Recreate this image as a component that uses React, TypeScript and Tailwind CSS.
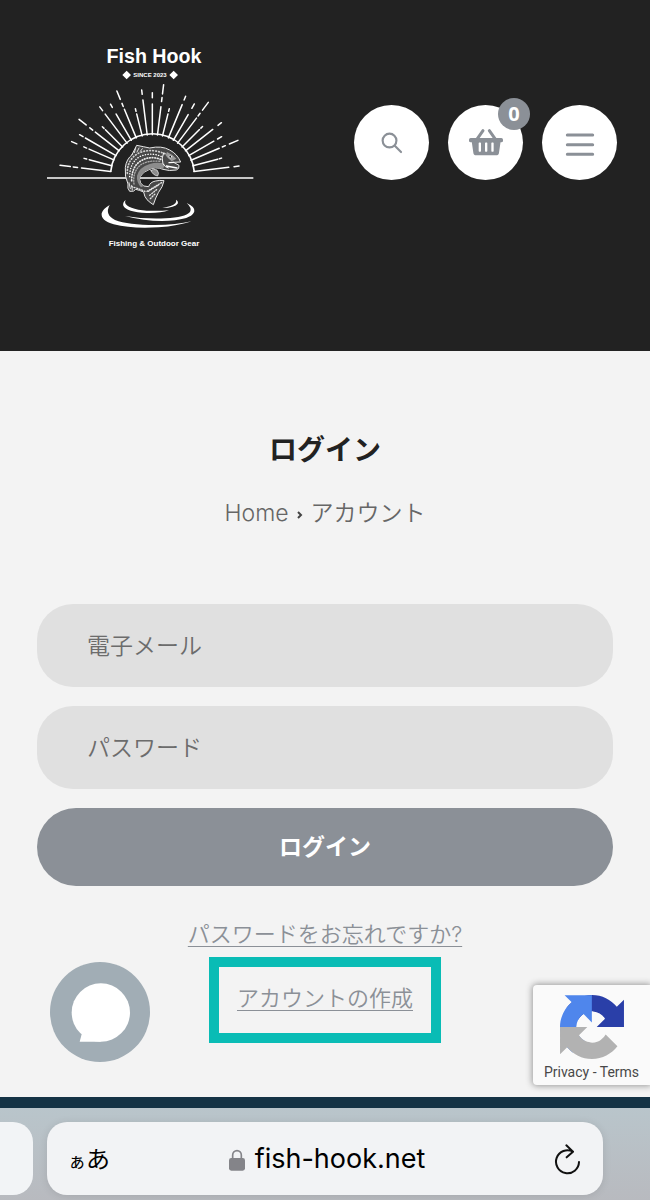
import React from "react";

const JP = "font-['Inter','Noto_Sans_CJK_JP',sans-serif]";

type Ray = [angle: number, ...segments: [number, number][]];

const rays: Ray[] = [
  [0, [126, 218], [237, 252]],
  [-7, [126, 232], [249, 262]],
  [-14, [126, 194], [202, 210]],
  [-22.5, [126, 219], [228, 238], [251, 278]],
  [-30, [126, 217], [240, 251]],
  [-37, [126, 235], [248, 262]],
  [-45, [126, 199], [205, 212]],
  [-52, [126, 217], [227, 238], [252, 279]],
  [-60, [126, 232], [240, 252]],
  [-66.5, [126, 207], [215, 224], [247, 264]],
  [-75, [126, 196], [204, 212]],
  [-83, [126, 214], [226, 239], [248, 279]],
  [7, [126, 211], [227, 239], [250, 278]],
  [14, [126, 194], [202, 210]],
  [22.5, [126, 234], [249, 261]],
  [30, [126, 215], [237, 252]],
  [37, [126, 220], [228, 238], [250, 279]],
  [45, [126, 200], [206, 213]],
  [52, [126, 230], [250, 263]],
  [60, [126, 213], [226, 240]],
  [67, [126, 218], [228, 238], [251, 279]],
  [75, [126, 203], [208, 215]],
  [83, [126, 231], [247, 262]],
];

function Sunburst() {
  return (
    <g stroke="#fff" strokeWidth="4.5" strokeLinecap="round">
      {rays.flatMap(([angle, ...segments]) =>
        segments.map(([from, to]) => {
          const s = Math.sin((angle * Math.PI) / 180);
          const c = Math.cos((angle * Math.PI) / 180);
          return (
            <line
              key={`${angle}:${from}`}
              x1={352 + s * from}
              y1={440 - c * from}
              x2={352 + s * to}
              y2={440 - c * to}
            />
          );
        }),
      )}
    </g>
  );
}

function Trout() {
  return (
    <g strokeLinecap="round" strokeLinejoin="round">
      <path
        d="M291 374L305 346Q325 350 344 354Q380 346 404 360Q427 372 437 396L416 397L432 406Q434 417 424 420Q402 424 384 418Q362 408 340 420Q316 430 314 448Q314 460 326 468L341 470Q345 456 362 453Q374 450 387 452Q384 470 370 488Q362 502 355 524Q345 518 336 509Q328 500 326 486Q312 480 302 478Q298 486 284 484Q276 476 279 462Q268 440 271 412Q274 388 291 374Z"
        fill="#484848"
        stroke="#e8e8e8"
        strokeWidth="3"
      />
      <path
        d="M384 418Q362 408 340 420Q316 430 314 448Q314 460 326 468L318 472Q304 456 306 438Q312 412 344 402Q368 394 390 402Z"
        fill="#8c8c8c"
      />
      <path d="M277 430Q276 390 308 371Q344 352 392 372" fill="none" stroke="#d0d0d0" strokeWidth="5" strokeDasharray="2 7" />
      <path d="M284 440Q284 398 314 380Q350 364 384 382" fill="none" stroke="#fff" strokeWidth="4" strokeDasharray="1 7" />
      <path d="M290 452Q290 412 314 395Q344 374 382 390" fill="none" stroke="#ececec" strokeWidth="5" strokeDasharray="2 6" />
      <path d="M297 462Q292 424 318 404Q340 390 376 394" fill="none" stroke="#aaa" strokeWidth="4" strokeDasharray="3 5" />
      <path d="M290 470Q305 474 330 484M340 484L372 464M344 496L366 478M346 506L360 492M336 484L380 458" fill="none" stroke="#e4e4e4" strokeWidth="4" strokeDasharray="3 5" />
      <path d="M302 354L298 368M312 354L306 366M322 356L316 364M282 458L286 476M290 466L292 480" fill="none" stroke="#ddd" strokeWidth="3" />
      <path d="M386 368Q378 384 384 402Q390 412 400 414" fill="none" stroke="#f5f5f5" strokeWidth="3" />
      <path d="M396 366Q414 374 424 386L410 394Q398 386 392 376Z" fill="#9b9b9b" />
      <circle cx="406" cy="380" r="4" fill="#111" stroke="#fff" strokeWidth="2" />
      <path d="M416 397L402 398M394 408L426 414" fill="none" stroke="#fff" strokeWidth="4" />
      <path d="M348 422Q354 414 366 420Q374 430 368 438Q354 436 348 422Z" fill="#8d8d8d" stroke="#eee" strokeWidth="2" />
    </g>
  );
}

function Logo() {
  return (
    <svg viewBox="0 0 690 690" className="block w-[230px] shrink-0" role="img" aria-label="Fish Hook">
      <g fill="#fff" textAnchor="middle" className="font-['Liberation_Sans',sans-serif] font-bold">
        <text x="357" y="98" fontSize="59">Fish Hook</text>
        <text x="345" y="142" fontSize="18">SINCE 2023</text>
        <text x="357" y="648" fontSize="24">Fishing &amp; Outdoor Gear</text>
      </g>
      <path d="M275 122l13 13-13 13-13-13zM416 122l13 13-13 13-13-13z" fill="#fff" />
      <Sunburst />
      <path d="M227 426A126 126 0 0 1 478 426" fill="none" stroke="#fff" strokeWidth="5" />
      <path d="M36 444H655" stroke="#fff" strokeWidth="5" />
      <Trout />
      <g fill="#fff">
        <path d="M224 525Q204 536 200 550Q197 572 236 583Q290 597 370 592Q430 588 470 574Q424 585 360 585Q280 585 240 570Q208 554 224 525Z" />
        <path d="M455 519Q480 530 478 544Q474 564 420 571Q350 579 270 558Q330 568 392 565Q450 562 465 546Q472 534 455 519Z" />
        <path d="M272 510Q262 518 265 527Q274 546 335 549Q376 550 402 541Q350 545 310 539Q262 529 272 510Z" />
        <path d="M423 509Q431 514 428 521Q420 533 382 534Q412 529 421 520Q425 515 423 509Z" />
      </g>
    </svg>
  );
}

function RoundButton({ label, children }: { label: string; children: React.ReactNode }) {
  return (
    <button type="button" aria-label={label} className="relative flex size-[75px] items-center justify-center rounded-full bg-white text-[#8b9097]">
      {children}
    </button>
  );
}

function Header() {
  return (
    <header className="flex items-start justify-between bg-[#222222] pt-[30px] pr-[33px] pb-[91px] pl-[35px]">
      <a href="#home">
        <Logo />
      </a>
      <nav className="mt-[75px] flex gap-[19px]">
        <RoundButton label="検索">
          <svg viewBox="122 139 70 70" className="w-[23px]" fill="none" stroke="currentColor" strokeWidth="6.5" strokeLinecap="round">
            <circle cx="151" cy="168" r="21" />
            <path d="M167 184L186 203" />
          </svg>
        </RoundButton>
        <RoundButton label="カート">
          <svg viewBox="386 130 108 86" className="w-9" fill="currentColor">
            <path d="M431 138L412 165M450 138L469 165" stroke="currentColor" strokeWidth="9" strokeLinecap="round" />
            <rect x="389" y="160" width="102" height="13" rx="5" />
            <path fillRule="evenodd" d="M397 170H484L479 204Q478 212 470 212H411Q403 212 402 204ZM418 176V198a3.500 3.500 0 0 0 7 0V176a3.500 3.500 0 0 0-7 0ZM437 176V198a3.500 3.500 0 0 0 7 0V176a3.500 3.500 0 0 0-7 0ZM456 176V198a3.500 3.500 0 0 0 7 0V176a3.500 3.500 0 0 0-7 0Z" />
          </svg>
          <span className="absolute -top-[7px] -right-[7px] flex size-8 items-center justify-center rounded-full bg-[#8b9097] font-['Open_Sans',sans-serif] text-xl font-bold text-white">
            0
          </span>
        </RoundButton>
        <RoundButton label="メニュー">
          <svg viewBox="675 130 90 85" className="w-[30px]" stroke="currentColor" strokeWidth="9" strokeLinecap="round">
            <path d="M682 151H758M682 180H758M682 209H758" />
          </svg>
        </RoundButton>
      </nav>
    </header>
  );
}

const fieldClass =
  "block h-[83px] w-full rounded-[36px] bg-[#e0e0e0] px-[50px] text-[23px] font-[350] text-[#333] placeholder:text-[#6c6c6c]";

function LoginForm() {
  return (
    <form className="mt-[74px] flex flex-col gap-[19px]">
      <input type="email" aria-label="電子メール" placeholder="電子メール" className={fieldClass} />
      <input type="password" aria-label="パスワード" placeholder="パスワード" className={fieldClass} />
      <button type="button" className="h-[78px] rounded-full bg-[#8b9097] text-[23px] font-bold text-white">
        ログイン
      </button>
    </form>
  );
}

function ChatButton() {
  return (
    <button type="button" aria-label="チャット" className="absolute bottom-[35px] left-[50px] size-[100px] rounded-full bg-[#a1adb5]">
      <svg viewBox="0 0 300 300" className="size-full" fill="#fff">
        <circle cx="152.5" cy="151.5" r="87.5" />
        <path d="M152 239H89L95 217L152 180Z" />
      </svg>
    </button>
  );
}

function Recaptcha() {
  return (
    <div className="absolute right-0 bottom-3 flex h-[100px] w-[117px] flex-col items-center rounded-l-[4px] bg-[#fafafa] pt-[10px] shadow-[0_0_6px_1px_#999]">
      <svg viewBox="0 0 64 64" className="size-16">
        <path fill="#2a3fa8" d="M64 31.955l-.033-1.370V4.687l-7.160 7.160C50.948 4.674 42.033.093 32.050.093c-10.400 0-19.622 4.960-25.458 12.640l11.736 11.860a15.550 15.550 0 0 1 4.754-5.334c2.050-1.600 4.952-2.906 8.968-2.906.485 0 .860.057 1.135.163 4.976.393 9.288 3.140 11.828 7.124l-8.307 8.307L64 31.953" />
        <path fill="#4f86ec" d="M31.862.094l-1.370.033H4.594l7.160 7.160C4.580 13.147 0 22.060 0 32.046c0 10.400 4.960 19.622 12.640 25.458L24.500 45.768a15.550 15.550 0 0 1-5.334-4.754c-1.600-2.050-2.906-4.952-2.906-8.968 0-.485.057-.860.163-1.135.393-4.976 3.140-9.288 7.124-11.828l8.307 8.307L31.860.095" />
        <path fill="#b2b2b2" d="M.001 32.045l.033 1.370v25.898l7.160-7.160c5.860 7.173 14.774 11.754 24.760 11.754 10.400 0 19.622-4.960 25.458-12.640l-11.736-11.860a15.550 15.550 0 0 1-4.754 5.334c-2.050 1.600-4.952 2.906-8.968 2.906-.485 0-.860-.057-1.135-.163-4.976-.393-9.288-3.140-11.828-7.124l8.307-8.307c-10.522.040-22.400.066-27.295-.005" />
      </svg>
      <p className="mt-[3px] font-['Roboto',sans-serif] text-sm leading-5 whitespace-nowrap text-[#484848]">
        <a href="#privacy">Privacy</a> - <a href="#terms">Terms</a>
      </p>
    </div>
  );
}

function BrowserBar() {
  return (
    <footer className="flex h-[103px] gap-[14px] border-t-[11px] border-[#143345] bg-linear-to-b from-[#b9c5cb] to-[#b8babf] pt-[14px] pr-[47px] pb-[5px]">
      <div className="w-[33px] shrink-0 rounded-r-[20px] bg-[#f2f4f6]" />
      <div className="flex grow items-center justify-between rounded-[20px] bg-[#f2f3f5] px-[21px] pt-[2px] text-black shadow-[0_1px_8px_#0000001a]">
        <button type="button" aria-label="ページ設定" className="flex items-baseline">
          <span className="text-lg">ぁ</span>
          <span className="text-2xl">あ</span>
        </button>
        <div className="flex items-center gap-[10px]">
          <svg viewBox="0 0 48 66" className="w-4" aria-hidden="true">
            <path d="M11 30V18a13 13 0 0 1 26 0V30" fill="none" stroke="#848489" strokeWidth="5" />
            <rect y="27" width="48" height="38" rx="7" fill="#848489" />
          </svg>
          <span className="text-[27px]">fish-hook.net</span>
        </div>
        <button type="button" aria-label="再読み込み" className="flex w-[38px] justify-end">
          <svg viewBox="684 168 84 98" className="w-7" fill="none" stroke="#111" strokeWidth="6" strokeLinecap="round" strokeLinejoin="round">
            <path d="M759 225A34.500 34.500 0 1 1 741 194M721 175L741 194L722 211" />
          </svg>
        </button>
      </div>
    </footer>
  );
}

export default function App() {
  return (
    <div className={`flex min-h-screen flex-col overflow-x-hidden bg-[#f3f3f3] ${JP}`}>
      <Header />
      <main className="relative grow px-[37px] pt-[79px] pb-[54px] text-center">
        <h1 className="text-[28px] leading-10 font-bold text-[#222222]">ログイン</h1>
        <nav className="mt-[26px] flex items-center justify-center gap-2 text-[23px] leading-[34px] font-[350] text-[#666]">
          <a href="#home">Home</a>
          <svg viewBox="0 0 6 8" className="mt-1 w-[6px]" fill="none" stroke="#444" strokeWidth="2" aria-hidden="true">
            <path d="M1 1L4 4L1 7" />
          </svg>
          <span>アカウント</span>
        </nav>
        <LoginForm />
        <div className="mt-8 flex flex-col items-center text-[22px] leading-8 font-[350] text-[#8b9097]">
          <a href="#recover" className="underline decoration-1 underline-offset-4">パスワードをお忘れですか?</a>
          <div className="mt-[7px] border-[10px] border-[#09bcb5] px-[18px] pt-[15px] pb-[19px]">
            <a href="#register" className="underline decoration-1 underline-offset-4">アカウントの作成</a>
          </div>
        </div>
        <ChatButton />
        <Recaptcha />
      </main>
      <BrowserBar />
    </div>
  );
}
